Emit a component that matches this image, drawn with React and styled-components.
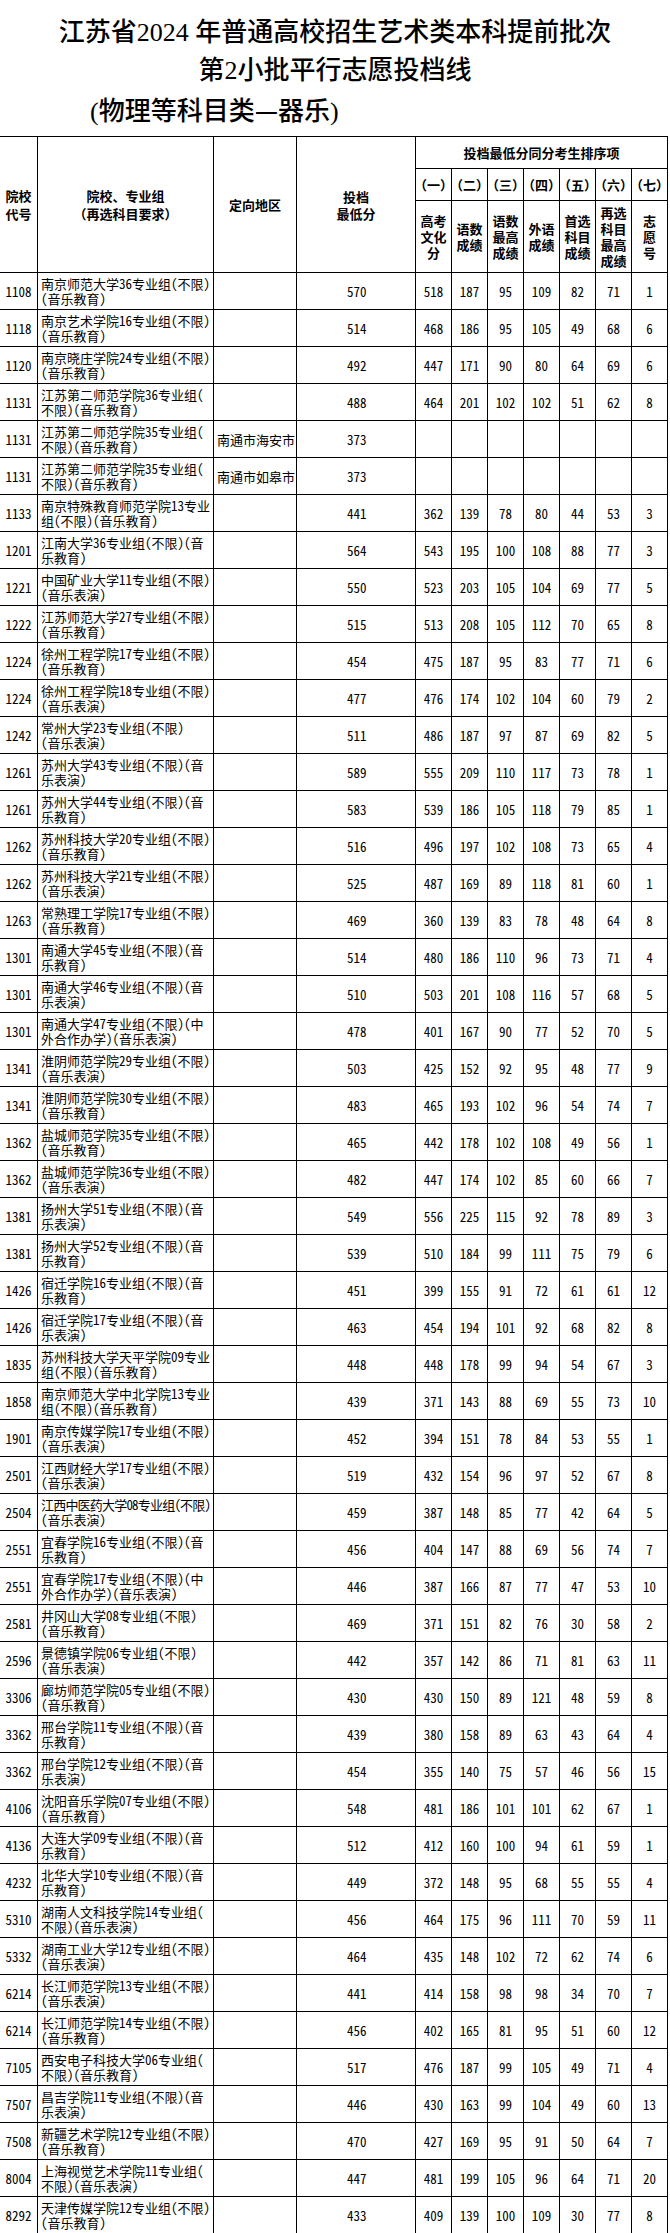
import React from "react";
import styled, { createGlobalStyle } from "styled-components";

const Global = createGlobalStyle`
  html, body { margin: 0; padding: 0; background: #fff; }
  body { font-family: "Noto Sans CJK SC", sans-serif; color: #000; }
`;

const Page = styled.main`
  width: 670px;
`;

const Title = styled.header`
  font-family: "Liberation Serif", "Noto Sans CJK SC", serif;
  font-size: 26px;
  line-height: 38px;
  font-weight: 500;
  padding: 14px 0 5px;
`;

const TitleLine = styled.div`
  text-align: ${(p) => p.$align || "center"};
  padding-left: ${(p) => p.$indent || 0}px;
  white-space: nowrap;
`;

const Dash = styled.span`
  font-family: "Noto Sans CJK SC", sans-serif;
`;

const COLS = "37px 175px 82px 118px repeat(7, 35px)";

const Sheet = styled.section`
  display: flex;
  flex-direction: column;
  gap: 1px;
  width: 668px;
  box-sizing: border-box;
  padding: 1px 1px 0 0;
  background: #000;
`;

const Head = styled.div`
  display: grid;
  grid-template-columns: ${COLS};
  grid-template-rows: 31px 31px 71px;
  gap: 1px;
  font-family: "Noto Sans CJK SC", sans-serif;
  font-weight: 700;
  font-size: 13px;
`;

const HeadCell = styled.div`
  background: #fff;
  display: flex;
  align-items: center;
  justify-content: center;
  text-align: center;
  white-space: nowrap;
  grid-column: ${(p) => p.$col};
  grid-row: ${(p) => p.$row};
  line-height: ${(p) => p.$lh || 18}px;
`;

const Row = styled.div`
  display: grid;
  grid-template-columns: ${COLS};
  gap: 1px;
  height: 36px;
  font-family: "Noto Sans Mono CJK SC", "Noto Sans CJK SC", sans-serif;
  font-size: 13px;
`;

const Cell = styled.div`
  background: #fff;
  display: flex;
  align-items: center;
  white-space: nowrap;
  overflow: hidden;
`;

const CodeCell = styled(Cell)`
  justify-content: center;
`;

const NameCell = styled(Cell)`
  flex-direction: column;
  align-items: flex-start;
  justify-content: center;
  padding-left: 3px;
  line-height: 15.5px;
`;

const NameLine = styled.span`
  display: block;
  letter-spacing: ${(p) => (p.$tight ? "-0.8px" : "normal")};
`;

const RegionCell = styled(Cell)`
  padding-left: 3px;
`;

const ScoreCell = styled(Cell)`
  padding-left: 50px;
`;

const NumCell = styled(Cell)`
  justify-content: center;
`;

const ORD = ["（一）", "（二）", "（三）", "（四）", "（五）", "（六）", "（七）"];
const LABELS = [
  ["高考", "文化", "分"],
  ["语数", "成绩"],
  ["语数", "最高", "成绩"],
  ["外语", "成绩"],
  ["首选", "科目", "成绩"],
  ["再选", "科目", "最高", "成绩"],
  ["志", "愿", "号"],
];

const E = "(音乐教育)";
const P = "(音乐表演)";

const ROWS = [
  ["1108", ["南京师范大学36专业组(不限)", E], "", "570", [518, 187, 95, 109, 82, 71, 1]],
  ["1118", ["南京艺术学院16专业组(不限)", E], "", "514", [468, 186, 95, 105, 49, 68, 6]],
  ["1120", ["南京晓庄学院24专业组(不限)", E], "", "492", [447, 171, 90, 80, 64, 69, 6]],
  ["1131", ["江苏第二师范学院36专业组(", "不限)(音乐教育)"], "", "488", [464, 201, 102, 102, 51, 62, 8]],
  ["1131", ["江苏第二师范学院35专业组(", "不限)(音乐教育)"], "南通市海安市", "373", null],
  ["1131", ["江苏第二师范学院35专业组(", "不限)(音乐教育)"], "南通市如皋市", "373", null],
  ["1133", ["南京特殊教育师范学院13专业", "组(不限)(音乐教育)"], "", "441", [362, 139, 78, 80, 44, 53, 3]],
  ["1201", ["江南大学36专业组(不限)(音", "乐教育)"], "", "564", [543, 195, 100, 108, 88, 77, 3]],
  ["1221", ["中国矿业大学11专业组(不限)", P], "", "550", [523, 203, 105, 104, 69, 77, 5]],
  ["1222", ["江苏师范大学27专业组(不限)", E], "", "515", [513, 208, 105, 112, 70, 65, 8]],
  ["1224", ["徐州工程学院17专业组(不限)", E], "", "454", [475, 187, 95, 83, 77, 71, 6]],
  ["1224", ["徐州工程学院18专业组(不限)", P], "", "477", [476, 174, 102, 104, 60, 79, 2]],
  ["1242", ["常州大学23专业组(不限)", P], "", "511", [486, 187, 97, 87, 69, 82, 5]],
  ["1261", ["苏州大学43专业组(不限)(音", "乐表演)"], "", "589", [555, 209, 110, 117, 73, 78, 1]],
  ["1261", ["苏州大学44专业组(不限)(音", "乐教育)"], "", "583", [539, 186, 105, 118, 79, 85, 1]],
  ["1262", ["苏州科技大学20专业组(不限)", E], "", "516", [496, 197, 102, 108, 73, 65, 4]],
  ["1262", ["苏州科技大学21专业组(不限)", P], "", "525", [487, 169, 89, 118, 81, 60, 1]],
  ["1263", ["常熟理工学院17专业组(不限)", E], "", "469", [360, 139, 83, 78, 48, 64, 8]],
  ["1301", ["南通大学45专业组(不限)(音", "乐教育)"], "", "514", [480, 186, 110, 96, 73, 71, 4]],
  ["1301", ["南通大学46专业组(不限)(音", "乐表演)"], "", "510", [503, 201, 108, 116, 57, 68, 5]],
  ["1301", ["南通大学47专业组(不限)(中", "外合作办学)(音乐表演)"], "", "478", [401, 167, 90, 77, 52, 70, 5]],
  ["1341", ["淮阴师范学院29专业组(不限)", P], "", "503", [425, 152, 92, 95, 48, 77, 9]],
  ["1341", ["淮阴师范学院30专业组(不限)", E], "", "483", [465, 193, 102, 96, 54, 74, 7]],
  ["1362", ["盐城师范学院35专业组(不限)", E], "", "465", [442, 178, 102, 108, 49, 56, 1]],
  ["1362", ["盐城师范学院36专业组(不限)", P], "", "482", [447, 174, 102, 85, 60, 66, 7]],
  ["1381", ["扬州大学51专业组(不限)(音", "乐表演)"], "", "549", [556, 225, 115, 92, 78, 89, 3]],
  ["1381", ["扬州大学52专业组(不限)(音", "乐教育)"], "", "539", [510, 184, 99, 111, 75, 79, 6]],
  ["1426", ["宿迁学院16专业组(不限)(音", "乐教育)"], "", "451", [399, 155, 91, 72, 61, 61, 12]],
  ["1426", ["宿迁学院17专业组(不限)(音", "乐表演)"], "", "463", [454, 194, 101, 92, 68, 82, 8]],
  ["1835", ["苏州科技大学天平学院09专业", "组(不限)(音乐教育)"], "", "448", [448, 178, 99, 94, 54, 67, 3]],
  ["1858", ["南京师范大学中北学院13专业", "组(不限)(音乐教育)"], "", "439", [371, 143, 88, 69, 55, 73, 10]],
  ["1901", ["南京传媒学院17专业组(不限)", P], "", "452", [394, 151, 78, 84, 53, 55, 1]],
  ["2501", ["江西财经大学17专业组(不限)", P], "", "519", [432, 154, 96, 97, 52, 67, 8]],
  ["2504", ["江西中医药大学08专业组(不限)", P], "", "459", [387, 148, 85, 77, 42, 64, 5], true],
  ["2551", ["宜春学院16专业组(不限)(音", "乐教育)"], "", "456", [404, 147, 88, 69, 56, 74, 7]],
  ["2551", ["宜春学院17专业组(不限)(中", "外合作办学)(音乐表演)"], "", "446", [387, 166, 87, 77, 47, 53, 10]],
  ["2581", ["井冈山大学08专业组(不限)", E], "", "469", [371, 151, 82, 76, 30, 58, 2]],
  ["2596", ["景德镇学院06专业组(不限)", P], "", "442", [357, 142, 86, 71, 81, 63, 11]],
  ["3306", ["廊坊师范学院05专业组(不限)", E], "", "430", [430, 150, 89, 121, 48, 59, 8]],
  ["3362", ["邢台学院11专业组(不限)(音", "乐教育)"], "", "439", [380, 158, 89, 63, 43, 64, 4]],
  ["3362", ["邢台学院12专业组(不限)(音", "乐表演)"], "", "454", [355, 140, 75, 57, 46, 56, 15]],
  ["4106", ["沈阳音乐学院07专业组(不限)", E], "", "548", [481, 186, 101, 101, 62, 67, 1]],
  ["4136", ["大连大学09专业组(不限)(音", "乐教育)"], "", "512", [412, 160, 100, 94, 61, 59, 1]],
  ["4232", ["北华大学10专业组(不限)(音", "乐教育)"], "", "449", [372, 148, 95, 68, 55, 55, 4]],
  ["5310", ["湖南人文科技学院14专业组(", "不限)(音乐表演)"], "", "456", [464, 175, 96, 111, 70, 59, 11]],
  ["5332", ["湖南工业大学12专业组(不限)", P], "", "464", [435, 148, 102, 72, 62, 74, 6]],
  ["6214", ["长江师范学院13专业组(不限)", P], "", "441", [414, 158, 98, 98, 34, 70, 7]],
  ["6214", ["长江师范学院14专业组(不限)", E], "", "456", [402, 165, 81, 95, 51, 60, 12]],
  ["7105", ["西安电子科技大学06专业组(", "不限)(音乐教育)"], "", "517", [476, 187, 99, 105, 49, 71, 4]],
  ["7507", ["昌吉学院11专业组(不限)(音", "乐表演)"], "", "446", [430, 163, 99, 104, 49, 60, 13]],
  ["7508", ["新疆艺术学院12专业组(不限)", E], "", "470", [427, 169, 95, 91, 50, 64, 7]],
  ["8004", ["上海视觉艺术学院11专业组(", "不限)(音乐表演)"], "", "447", [481, 199, 105, 96, 64, 71, 20]],
  ["8292", ["天津传媒学院12专业组(不限)", E], "", "433", [409, 139, 100, 109, 30, 77, 8]],
  ["", ["", ""], "", "", null],
];

function Lines({ items }) {
  return items.map((t, i) => (
    <React.Fragment key={i}>
      {i > 0 && <br />}
      {t}
    </React.Fragment>
  ));
}

export default function App() {
  return (
    <Page>
      <Global />
      <Title>
        <TitleLine>江苏省2024 年普通高校招生艺术类本科提前批次</TitleLine>
        <TitleLine>第2小批平行志愿投档线</TitleLine>
        <TitleLine $align="left" $indent={90}>
          (物理等科目类<Dash>—</Dash>器乐)
        </TitleLine>
      </Title>
      <Sheet>
        <Head>
          <HeadCell $col="1" $row="1 / 4">
            <span><Lines items={["院校", "代号"]} /></span>
          </HeadCell>
          <HeadCell $col="2" $row="1 / 4">
            <span><Lines items={["院校、专业组", "（再选科目要求）"]} /></span>
          </HeadCell>
          <HeadCell $col="3" $row="1 / 4">定向地区</HeadCell>
          <HeadCell $col="4" $row="1 / 4" $lh={17}>
            <span><Lines items={["投档", "最低分"]} /></span>
          </HeadCell>
          <HeadCell $col="5 / 12" $row="1">投档最低分同分考生排序项</HeadCell>
          {ORD.map((o, i) => (
            <HeadCell key={o} $col={String(5 + i)} $row="2">{o}</HeadCell>
          ))}
          {LABELS.map((l, i) => (
            <HeadCell key={i} $col={String(5 + i)} $row="3" $lh={16}>
              <span><Lines items={l} /></span>
            </HeadCell>
          ))}
        </Head>
        {ROWS.map((r, i) => (
          <Row key={i}>
            <CodeCell>{r[0]}</CodeCell>
            <NameCell>
              <NameLine $tight={r[5]}>{r[1][0]}</NameLine>
              <NameLine>{r[1][1]}</NameLine>
            </NameCell>
            <RegionCell>{r[2]}</RegionCell>
            <ScoreCell>{r[3]}</ScoreCell>
            {(r[4] || Array(7).fill("")).map((v, j) => (
              <NumCell key={j}>{v}</NumCell>
            ))}
          </Row>
        ))}
      </Sheet>
    </Page>
  );
}
